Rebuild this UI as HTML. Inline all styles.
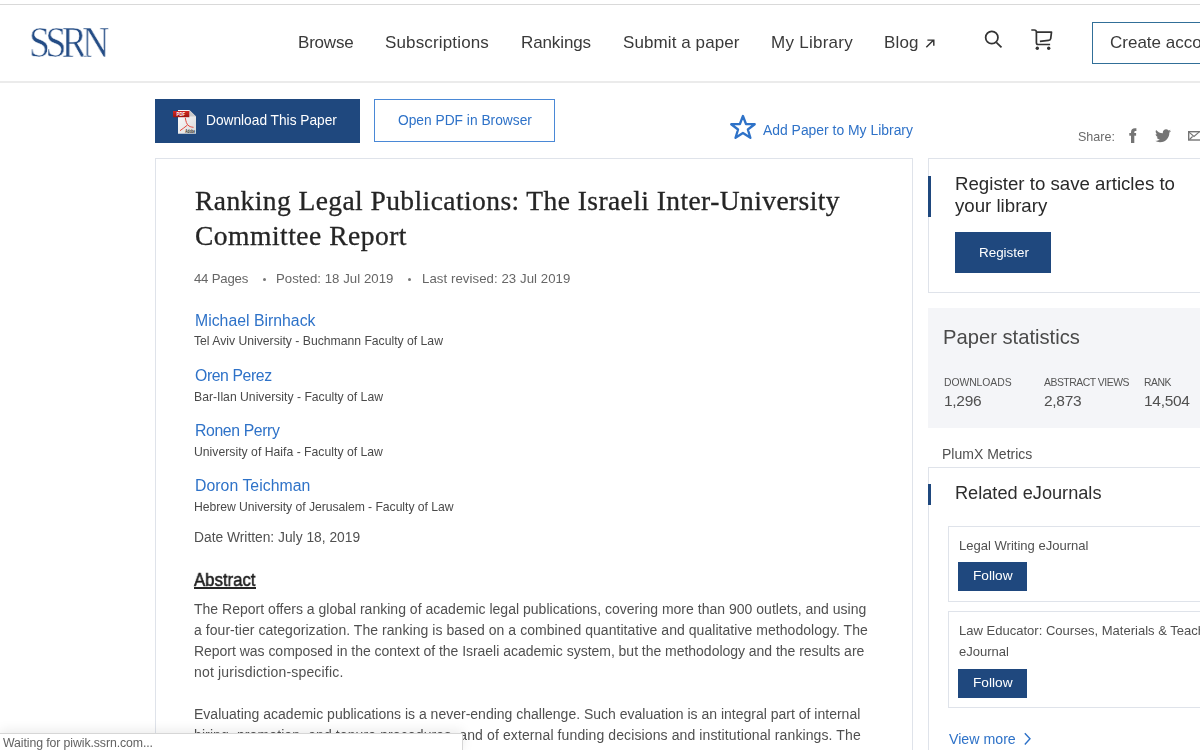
<!DOCTYPE html>
<html><head><meta charset="utf-8"><style>
html,body{margin:0;padding:0;width:1200px;height:750px;overflow:hidden;background:#fff;position:relative}
.t{position:absolute;white-space:nowrap;line-height:1;will-change:transform;}
.r{position:absolute;}
</style></head><body>
<div class="r" style="left:0px;top:4px;width:1200px;height:1px;background:#d9d9d9"></div>
<div class="r" style="left:0px;top:81px;width:1200px;height:2px;background:#ebebeb"></div>
<div class="t" style="left:28.5px;top:19.5px;font-family:'Liberation Serif',serif;font-size:44px;line-height:45px;color:#244c85;transform-origin:0 0;transform:scaleX(0.86);letter-spacing:-5.5px;-webkit-text-stroke:0.6px #fff">SSRN</div>
<div class="t" style="left:297.50px;top:33.91px;font-size:17.00px;font-family:'Liberation Sans', sans-serif;color:#3a3a3a;letter-spacing:-0.198px;">Browse</div>
<div class="t" style="left:384.50px;top:33.91px;font-size:17.00px;font-family:'Liberation Sans', sans-serif;color:#3a3a3a;letter-spacing:0.150px;">Subscriptions</div>
<div class="t" style="left:520.60px;top:33.91px;font-size:17.00px;font-family:'Liberation Sans', sans-serif;color:#3a3a3a;letter-spacing:-0.109px;">Rankings</div>
<div class="t" style="left:622.50px;top:33.91px;font-size:17.00px;font-family:'Liberation Sans', sans-serif;color:#3a3a3a;letter-spacing:0.088px;">Submit a paper</div>
<div class="t" style="left:771.00px;top:33.91px;font-size:17.00px;font-family:'Liberation Sans', sans-serif;color:#3a3a3a;letter-spacing:0.267px;">My Library</div>
<div class="t" style="left:884.00px;top:33.91px;font-size:17.00px;font-family:'Liberation Sans', sans-serif;color:#3a3a3a;letter-spacing:0.180px;">Blog</div>
<svg class="r" style="left:924px;top:38px" width="12" height="12" viewBox="0 0 12 12"><path d="M2.3 9.3 L9.6 2.1 M3.4 2.1 H9.8 V7.8" stroke="#333" stroke-width="1.45" fill="none"/></svg>
<svg class="r" style="left:983px;top:29px" width="21" height="21" viewBox="0 0 21 21"><circle cx="8.8" cy="8.5" r="6.15" stroke="#333" stroke-width="1.75" fill="none"/><path d="M13.3 13.3 L18.5 18.3" stroke="#333" stroke-width="1.75" fill="none"/></svg>
<svg class="r" style="left:1028px;top:27px" width="26" height="25" viewBox="0 0 26 25"><path d="M3.3 3 H6.3 Q8.4 3 8.4 5.2 V15.8 Q8.4 17.5 10.1 17.5 H22.1" stroke="#333" stroke-width="1.7" fill="none"/><path d="M8.4 5.1 H23.5 L22.7 11.6 Q22.4 13.3 20.5 13.4 L11.9 14.3" stroke="#333" stroke-width="1.7" fill="none" stroke-linejoin="round"/><circle cx="9.3" cy="21.3" r="1.7" fill="#333"/><circle cx="20.7" cy="21.3" r="1.7" fill="#333"/></svg>
<div class="r" style="left:1092px;top:22px;width:140px;height:41.5px;box-sizing:border-box;border:1.7px solid #316f98;background:#fff"></div>
<div class="t" style="left:1110.00px;top:33.61px;font-size:17.00px;font-family:'Liberation Sans', sans-serif;color:#3a3a3a;">Create account</div>
<div class="r" style="left:155px;top:99px;width:205px;height:44px;background:#1f487e"></div>
<div class="t" style="left:205.50px;top:113.98px;font-size:13.73px;font-family:'Liberation Sans', sans-serif;color:#ffffff;">Download This Paper</div>
<div class="r" style="left:374px;top:99px;width:181px;height:43px;box-sizing:border-box;border:1px solid #4a88d6"></div>
<div class="t" style="left:397.50px;top:113.94px;font-size:13.78px;font-family:'Liberation Sans', sans-serif;color:#2e72c8;">Open PDF in Browser</div>
<svg class="r" style="left:172px;top:109px" width="26" height="26" viewBox="0 0 26 26">
<defs><linearGradient id="pg" x1="0" y1="0" x2="1" y2="1"><stop offset="0" stop-color="#ffffff"/><stop offset="1" stop-color="#d9d9d9"/></linearGradient>
<linearGradient id="rg" x1="0" y1="0" x2="0" y2="1"><stop offset="0" stop-color="#d42a22"/><stop offset="1" stop-color="#9c1510"/></linearGradient></defs>
<path d="M6 1 H17.3 L24 7.5 V24.8 H6 Z" fill="url(#pg)"/>
<path d="M17.3 1 V7.5 H24 Z" fill="#c9c9c9"/>
<rect x="1" y="2" width="16.3" height="6.2" fill="url(#rg)"/>
<text x="4.6" y="6.9" font-family="Liberation Sans" font-size="5" font-weight="bold" fill="#fff" textLength="8.4" lengthAdjust="spacingAndGlyphs">PDF</text>
<path d="M13.3 8.7 C13.8 12, 14.5 15.5, 17 17 C18.5 18, 21 18.3, 21.5 18.3 M15.5 16 C13 18, 10.5 20, 8 21.7" stroke="#e4473c" stroke-width="1" fill="none"/>
<text x="13.3" y="24" font-family="Liberation Sans" font-size="4.6" font-weight="bold" fill="#222" textLength="9.6" lengthAdjust="spacingAndGlyphs">Adobe</text>
</svg>
<svg class="r" style="left:729px;top:113px" width="28" height="28" viewBox="0 0 28 28"><path d="M13.95 3.00 L16.99 11.03 L25.70 11.22 L18.85 16.48 L21.39 24.80 L13.95 19.92 L6.51 24.80 L9.05 16.48 L2.20 11.22 L10.91 11.03 Z" stroke="#2e72c8" stroke-width="2.3" fill="none" stroke-linejoin="round"/></svg>
<div class="t" style="left:763.30px;top:123.53px;font-size:13.91px;font-family:'Liberation Sans', sans-serif;color:#2e72c8;">Add Paper to My Library</div>
<div class="t" style="left:1077.70px;top:130.67px;font-size:12.56px;font-family:'Liberation Sans', sans-serif;color:#6a6a6a;">Share:</div>
<svg class="r" style="left:1128px;top:128px" width="10" height="16" viewBox="0 0 10 16"><path d="M3 15 V4.5 Q3 0.3 7 0.3 H8.4 V2.9 H7.4 Q6.3 2.9 6.3 4.3 V15 Z" fill="#747474"/><rect x="1.3" y="5" width="6.8" height="2.7" fill="#747474"/></svg>
<svg class="r" style="left:1155px;top:129px" width="16" height="14" viewBox="0 0 24 20"><path d="M24 2.4c-.9.4-1.8.6-2.8.8 1-.6 1.8-1.6 2.2-2.7-1 .6-2 1-3.1 1.2C19.3.6 18 0 16.6 0c-2.7 0-4.9 2.2-4.9 4.9 0 .4 0 .8.1 1.1C7.7 5.8 4.1 3.9 1.7.9c-.4.7-.7 1.6-.7 2.5 0 1.7.9 3.2 2.2 4.100-.8 0-1.6-.2-2.2-.6v.1c0 2.400 1.700 4.400 3.900 4.800-.4.1-.8.2-1.3.2-.3 0-.6 0-.9-.1.6 2 2.400 3.400 4.600 3.400-1.700 1.300-3.800 2.100-6.100 2.100-.4 0-.8 0-1.200-.1 2.200 1.400 4.800 2.200 7.500 2.200 9.100 0 14-7.500 14-14v-.6c1-.7 1.800-1.600 2.500-2.500z" fill="#747474"/></svg>
<svg class="r" style="left:1188px;top:131px" width="16" height="10" viewBox="0 0 16 10"><rect x="0.7" y="0.7" width="14.6" height="8.3" stroke="#747474" stroke-width="1.4" fill="none"/><path d="M0.7 0.9 L6 5.5 L11.3 0.9 M1.5 8.5 L4.6 5.5" stroke="#747474" stroke-width="1.1" fill="none"/></svg>
<div class="r" style="left:155px;top:158px;width:758px;height:700px;box-sizing:border-box;border:1px solid #dfe3ea;background:#fff"></div>
<div class="t" style="left:194.50px;top:187.17px;font-size:27.50px;font-family:'Liberation Serif', serif;color:#252525;letter-spacing:0.423px;-webkit-text-stroke:0.3px #252525;">Ranking Legal Publications: The Israeli Inter-University</div>
<div class="t" style="left:195.00px;top:221.97px;font-size:27.50px;font-family:'Liberation Serif', serif;color:#252525;letter-spacing:0.505px;-webkit-text-stroke:0.3px #252525;">Committee Report</div>
<div class="t" style="left:194.00px;top:271.53px;font-size:13.20px;font-family:'Liberation Sans', sans-serif;color:#666;letter-spacing:-0.211px;">44 Pages</div>
<div class="r" style="left:263px;top:277.5px;width:3px;height:3px;background:#777;border-radius:50%"></div>
<div class="t" style="left:275.70px;top:271.53px;font-size:13.20px;font-family:'Liberation Sans', sans-serif;color:#666;letter-spacing:0.043px;">Posted: 18 Jul 2019</div>
<div class="r" style="left:408px;top:277.5px;width:3px;height:3px;background:#777;border-radius:50%"></div>
<div class="t" style="left:421.70px;top:271.53px;font-size:13.20px;font-family:'Liberation Sans', sans-serif;color:#666;letter-spacing:0.071px;">Last revised: 23 Jul 2019</div>
<div class="t" style="left:194.50px;top:313.13px;font-size:15.80px;font-family:'Liberation Sans', sans-serif;color:#2e72c8;letter-spacing:0.013px;">Michael Birnhack</div>
<div class="t" style="left:194.00px;top:335.47px;font-size:12.20px;font-family:'Liberation Sans', sans-serif;color:#4a4a4a;letter-spacing:-0.002px;">Tel Aviv University - Buchmann Faculty of Law</div>
<div class="t" style="left:194.50px;top:368.23px;font-size:15.80px;font-family:'Liberation Sans', sans-serif;color:#2e72c8;letter-spacing:-0.407px;">Oren Perez</div>
<div class="t" style="left:194.00px;top:390.57px;font-size:12.20px;font-family:'Liberation Sans', sans-serif;color:#4a4a4a;letter-spacing:-0.000px;">Bar-Ilan University - Faculty of Law</div>
<div class="t" style="left:194.50px;top:423.33px;font-size:15.80px;font-family:'Liberation Sans', sans-serif;color:#2e72c8;letter-spacing:-0.379px;">Ronen Perry</div>
<div class="t" style="left:194.00px;top:445.67px;font-size:12.20px;font-family:'Liberation Sans', sans-serif;color:#4a4a4a;letter-spacing:0.018px;">University of Haifa - Faculty of Law</div>
<div class="t" style="left:194.50px;top:478.43px;font-size:15.80px;font-family:'Liberation Sans', sans-serif;color:#2e72c8;letter-spacing:0.048px;">Doron Teichman</div>
<div class="t" style="left:194.00px;top:500.77px;font-size:12.20px;font-family:'Liberation Sans', sans-serif;color:#4a4a4a;letter-spacing:-0.043px;">Hebrew University of Jerusalem - Faculty of Law</div>
<div class="t" style="left:194.00px;top:530.62px;font-size:13.80px;font-family:'Liberation Sans', sans-serif;color:#505050;letter-spacing:-0.004px;">Date Written: July 18, 2019</div>
<div class="t" style="left:194px;top:570.8px;font-size:18.5px;font-family:'Liberation Sans',sans-serif;color:#1e1e1e;transform-origin:0 0;transform:scaleX(0.905);-webkit-text-stroke:0.55px #1e1e1e">Abstract</div>
<div class="r" style="left:194px;top:587.2px;width:62px;height:1.4px;background:#262626"></div>
<div class="t" style="left:194.00px;top:602.45px;font-size:14.00px;font-family:'Liberation Sans', sans-serif;color:#505050;letter-spacing:0.016px;">The Report offers a global ranking of academic legal publications, covering more than 900 outlets, and using</div>
<div class="t" style="left:194.00px;top:623.45px;font-size:14.00px;font-family:'Liberation Sans', sans-serif;color:#505050;letter-spacing:0.049px;">a four-tier categorization. The ranking is based on a combined quantitative and qualitative methodology. The</div>
<div class="t" style="left:194.00px;top:644.45px;font-size:14.00px;font-family:'Liberation Sans', sans-serif;color:#505050;letter-spacing:-0.027px;">Report was composed in the context of the Israeli academic system, but the methodology and the results are</div>
<div class="t" style="left:194.00px;top:664.55px;font-size:14.00px;font-family:'Liberation Sans', sans-serif;color:#505050;letter-spacing:0.182px;">not jurisdiction-specific.</div>
<div class="t" style="left:194.00px;top:706.65px;font-size:14.00px;font-family:'Liberation Sans', sans-serif;color:#505050;letter-spacing:0.001px;">Evaluating academic publications is a never-ending challenge. Such evaluation is an integral part of internal</div>
<div class="t" style="left:194.00px;top:727.65px;font-size:14.00px;font-family:'Liberation Sans', sans-serif;color:#505050;letter-spacing:0.110px;">hiring, promotion, and tenure procedures, and of external funding decisions and institutional rankings. The</div>
<div class="t" style="left:194.00px;top:748.95px;font-size:14.00px;font-family:'Liberation Sans', sans-serif;color:#505050;letter-spacing:-0.017px;">evaluation of legal publications raises unique difficulties, because of the diversity of legal scholarship and the</div>
<div class="r" style="left:928px;top:158px;width:300px;height:135px;box-sizing:border-box;border:1px solid #dfe3ea;background:#fff"></div>
<div class="r" style="left:928px;top:176px;width:3px;height:41px;background:#1f487e"></div>
<div class="t" style="left:954.70px;top:175.30px;font-size:18.67px;font-family:'Liberation Sans', sans-serif;color:#2a2a2a;letter-spacing:0.006px;">Register to save articles to</div>
<div class="t" style="left:954.70px;top:196.50px;font-size:18.67px;font-family:'Liberation Sans', sans-serif;color:#2a2a2a;">your library</div>
<div class="r" style="left:955px;top:232px;width:96px;height:41px;background:#1f487e"></div>
<div class="t" style="left:978.60px;top:245.63px;font-size:13.43px;font-family:'Liberation Sans', sans-serif;color:#fff;">Register</div>
<div class="r" style="left:928px;top:307.5px;width:300px;height:120.3px;background:#f4f5f8"></div>
<div class="t" style="left:943.00px;top:326.80px;font-size:20.20px;font-family:'Liberation Sans', sans-serif;color:#4a4a4a;">Paper statistics</div>
<div class="t" style="left:943.80px;top:378.00px;font-size:10.40px;font-family:'Liberation Sans', sans-serif;color:#555;letter-spacing:-0.069px;">DOWNLOADS</div>
<div class="t" style="left:1043.70px;top:378.00px;font-size:10.40px;font-family:'Liberation Sans', sans-serif;color:#555;letter-spacing:-0.475px;">ABSTRACT VIEWS</div>
<div class="t" style="left:1144.30px;top:378.00px;font-size:10.40px;font-family:'Liberation Sans', sans-serif;color:#555;letter-spacing:-0.469px;">RANK</div>
<div class="t" style="left:943.80px;top:393.28px;font-size:15.50px;font-family:'Liberation Sans', sans-serif;color:#505050;letter-spacing:-0.303px;">1,296</div>
<div class="t" style="left:1043.70px;top:393.28px;font-size:15.50px;font-family:'Liberation Sans', sans-serif;color:#505050;letter-spacing:-0.303px;">2,873</div>
<div class="t" style="left:1144.30px;top:393.28px;font-size:15.50px;font-family:'Liberation Sans', sans-serif;color:#505050;letter-spacing:-0.306px;">14,504</div>
<div class="t" style="left:942.00px;top:446.82px;font-size:14.03px;font-family:'Liberation Sans', sans-serif;color:#505050;">PlumX Metrics</div>
<div class="r" style="left:928px;top:467px;width:300px;height:400px;box-sizing:border-box;border:1px solid #dfe3ea;background:#fff"></div>
<div class="r" style="left:928px;top:484px;width:3px;height:21px;background:#1f487e"></div>
<div class="t" style="left:955.00px;top:484.31px;font-size:18.18px;font-family:'Liberation Sans', sans-serif;color:#2e2e2e;">Related eJournals</div>
<div class="r" style="left:948px;top:526px;width:300px;height:76px;box-sizing:border-box;border:1px solid #dfe3ea;background:#fff"></div>
<div class="t" style="left:958.50px;top:539.26px;font-size:13.04px;font-family:'Liberation Sans', sans-serif;color:#505050;">Legal Writing eJournal</div>
<div class="r" style="left:958px;top:562px;width:69px;height:29px;background:#1f487e"></div>
<div class="t" style="left:973.00px;top:569.40px;font-size:13.70px;font-family:'Liberation Sans', sans-serif;color:#fff;">Follow</div>
<div class="r" style="left:948px;top:611px;width:300px;height:97px;box-sizing:border-box;border:1px solid #dfe3ea;background:#fff"></div>
<div class="t" style="left:958.50px;top:624.46px;font-size:13.04px;font-family:'Liberation Sans', sans-serif;color:#505050;">Law Educator: Courses, Materials &amp; Teaching</div>
<div class="t" style="left:958.50px;top:645.46px;font-size:13.04px;font-family:'Liberation Sans', sans-serif;color:#505050;">eJournal</div>
<div class="r" style="left:958px;top:669px;width:69px;height:29px;background:#1f487e"></div>
<div class="t" style="left:973.00px;top:676.40px;font-size:13.70px;font-family:'Liberation Sans', sans-serif;color:#fff;">Follow</div>
<div class="t" style="left:949.00px;top:731.98px;font-size:14.20px;font-family:'Liberation Sans', sans-serif;color:#2e72c8;">View more</div>
<svg class="r" style="left:1022px;top:732px" width="10" height="14" viewBox="0 0 10 14"><path d="M2.8 1.2 L8 6.8 L2.8 12.4" stroke="#2e72c8" stroke-width="1.4" fill="none"/></svg>
<div class="r" style="left:0px;top:733px;width:463px;height:20px;box-sizing:border-box;border:1px solid #d6d6d6;border-left:none;background:#fff;box-shadow:0 -3px 12px rgba(0,0,0,0.08)"></div>
<div class="t" style="left:3.00px;top:737.09px;font-size:12.30px;font-family:'Liberation Sans', sans-serif;color:#626262;letter-spacing:-0.094px;">Waiting for piwik.ssrn.com...</div>
</body></html>
